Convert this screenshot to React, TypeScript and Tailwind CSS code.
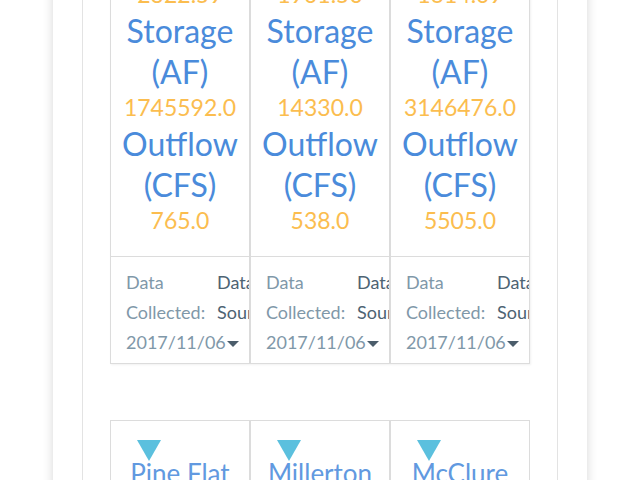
import React from "react";

const font = { fontFamily: "Lato, 'Noto Sans', sans-serif" };

type Res = { top: string; storage: string; outflow: string };

const row1: Res[] = [
  { top: "2322.59", storage: "1745592.0", outflow: "765.0" },
  { top: "1901.50", storage: "14330.0", outflow: "538.0" },
  { top: "1614.09", storage: "3146476.0", outflow: "5505.0" },
];

const row2 = ["Pine Flat", "Millerton", "McClure"];

function Card({ r }: { r: Res }) {
  return (
    <div className="w-[140px] border border-[#dcdcdc] bg-white flex flex-col shadow-[1px_1px_2px_rgba(0,0,0,0.06)]">
      <div className="text-center pb-[20px]">
        <div className="text-[23px] leading-[31px] text-[#fbbd4f]">{r.top}</div>
        <div className="text-[32px] leading-[41px] text-[#4a8bdb]">Storage</div>
        <div className="text-[32px] leading-[41px] text-[#4a8bdb]">(AF)</div>
        <div className="text-[23px] leading-[31px] text-[#fbbd4f]">{r.storage}</div>
        <div className="text-[32px] leading-[41px] text-[#4a8bdb]">Outflow</div>
        <div className="text-[32px] leading-[41px] text-[#4a8bdb]">(CFS)</div>
        <div className="text-[23px] leading-[31px] text-[#fbbd4f]">{r.outflow}</div>
      </div>
      <div className="border-t border-[#dcdcdc] flex overflow-hidden pl-[15px] pt-[10px] pb-[6px] text-[18px] leading-[30px] text-left">
        <div className="w-[91px] shrink-0 text-[#7f98a9]">
          Data Collected:{" "}
          <span className="whitespace-nowrap">
            2017/11/06
            <span className="inline-block align-middle ml-[1px] border-x-[6px] border-x-transparent border-t-[6px] border-t-[#4b5d6b]" />
          </span>
        </div>
        <div className="shrink-0 whitespace-nowrap text-[#4d6373]">
          Data
          <br />
          Source: CDEC
        </div>
      </div>
    </div>
  );
}

function Card2({ name }: { name: string }) {
  return (
    <div className="relative w-[140px] h-[120px] border border-[#dcdcdc] bg-white pt-[35px] text-center">
      <span className="absolute top-[19px] left-[26px] w-0 h-0 border-x-[12px] border-x-transparent border-t-[21px] border-t-[#5bc0de]" />
      <div className="text-[26px] leading-[34px] text-[#6199e0] whitespace-nowrap">{name}</div>
    </div>
  );
}

export default function App() {
  return (
    <div className="h-[480px] overflow-hidden bg-white" style={font}>
      <div className="ml-[53px] w-[534px] h-[540px] -mt-[22px] bg-white px-[29px] shadow-[0_0_10px_rgba(0,0,0,0.16)]">
        <div className="h-full border-x border-[#e3e3e3] px-[27px]">
          <div className="flex">
            {row1.map((r, i) => (
              <Card key={i} r={r} />
            ))}
          </div>
          <div className="flex mt-[56px]">
            {row2.map((n) => (
              <Card2 key={n} name={n} />
            ))}
          </div>
        </div>
      </div>
    </div>
  );
}
